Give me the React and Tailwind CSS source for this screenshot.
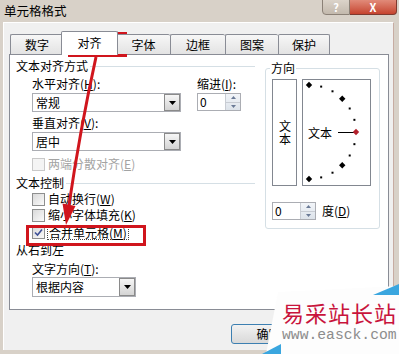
import React from 'react';

const Mn = ({ k }) => (
  <span>
    (<u>{k}</u>)
  </span>
);

function CheckBox({ checked, disabled }) {
  return (
    <span
      className={`w-[13px] h-[13px] shrink-0 border flex items-center justify-center ${
        disabled
          ? 'border-[#c9c9c9] bg-[#f4f4f4]'
          : 'border-[#8e8f8f] bg-gradient-to-br from-[#d9d9d9] to-[#fbfbfb]'
      }`}
    >
      {checked && (
        <svg width="9" height="9" viewBox="0 0 9 9">
          <path d="M1 4.5 L3.5 7 L8 1.5" fill="none" stroke="#3d4f96" strokeWidth="1.6" />
        </svg>
      )}
    </span>
  );
}

function Combo({ value, width, height }) {
  return (
    <div
      className={`flex items-center justify-between border border-[#abadb3] bg-white ${width} ${height}`}
    >
      <span className="pl-[3px]">{value}</span>
      <span className="w-[16px] h-full border border-[#8a8a8a] bg-gradient-to-b from-[#f6f6f6] to-[#d4d4d4] flex items-center justify-center">
        <svg width="7" height="4" viewBox="0 0 7 4">
          <path d="M0 0 H7 L3.5 4 Z" fill="#000" />
        </svg>
      </span>
    </div>
  );
}

function Spinner({ value }) {
  return (
    <div className="flex w-[44px] h-[18px] border border-[#abadb3] bg-white">
      <span className="flex-1 pl-[2px] leading-[16px]">{value}</span>
      <span className="w-[15px] flex flex-col border-l border-[#c8ccd3] bg-gradient-to-b from-[#f2f5f9] to-[#dde3ea]">
        <span className="flex-1 flex items-center justify-center border-b border-[#c8ccd3]">
          <svg width="5" height="3" viewBox="0 0 5 3">
            <path d="M0 3 L2.5 0 L5 3 Z" fill="#6a7a96" />
          </svg>
        </span>
        <span className="flex-1 flex items-center justify-center">
          <svg width="5" height="3" viewBox="0 0 5 3">
            <path d="M0 0 H5 L2.5 3 Z" fill="#6a7a96" />
          </svg>
        </span>
      </span>
    </div>
  );
}

const tabs = [
  { label: '数字', w: 'w-[53px]' },
  { label: '对齐', w: 'w-[57px]', active: true },
  { label: '字体', w: 'w-[54px]' },
  { label: '边框', w: 'w-[55px]' },
  { label: '图案', w: 'w-[53px]' },
  { label: '保护', w: 'w-[52px]' },
];

function Dial() {
  const pts = [];
  for (let a = 90; a >= -90; a -= 15) {
    const r = (a * Math.PI) / 180;
    pts.push({ a, x: 6 + 47 * Math.cos(r), y: 52 - 47 * Math.sin(r) });
  }
  return (
    <svg className="absolute inset-0" width="67" height="105" viewBox="0 0 67 105">
      <line x1="35" y1="52.5" x2="51" y2="52.5" stroke="#000" strokeWidth="1" />
      {pts.map((p) => {
        const big = p.a % 45 === 0;
        if (big) {
          const s = 3.2;
          return (
            <path
              key={p.a}
              d={`M${p.x} ${p.y - s} L${p.x + s} ${p.y} L${p.x} ${p.y + s} L${p.x - s} ${p.y} Z`}
              fill={p.a === 0 ? '#b3202c' : '#000'}
            />
          );
        }
        return <rect key={p.a} x={p.x - 1} y={p.y - 1} width="2" height="2" fill="#000" />;
      })}
    </svg>
  );
}

export default function App() {
  return (
    <div className="relative w-[399px] h-[354px] overflow-hidden bg-[#d8d1c8] text-[12px] leading-[14px] text-black font-['Noto_Sans_CJK_SC',sans-serif]">
      {/* title bar */}
      <div className="h-[22px] flex justify-between">
        <span className="pl-[4px] pt-[4px] text-[12.5px]">单元格格式</span>
        <div className="flex mr-[2px] -mt-[6px] h-[21px]">
          <div className="w-[28px] rounded-bl-[4px] border border-[#8b8177] bg-gradient-to-b from-[#e4ddd4] to-[#c3b9ad] flex items-end justify-center pb-[1px] text-white font-bold text-[11px] leading-[12px]">
            ?
          </div>
          <div className="w-[47px] rounded-br-[4px] border border-l-0 border-[#7e3a30] bg-gradient-to-b from-[#e9a293] to-[#c5432f] flex items-end justify-center pb-[1px] text-white font-bold text-[11px] leading-[12px]">
            X
          </div>
        </div>
      </div>

      {/* client area */}
      <div className="ml-[3px] w-[391px] h-[328px] bg-[#f0f0f0] border-t border-l border-white border-r border-r-[#c7aca2]">
        {/* tabs */}
        <div className="flex items-end ml-[6px] mt-[8px] h-[24px] relative z-10 -mb-[1px]">
          {tabs.map((t) =>
            t.active ? (
              <div
                key={t.label}
                className={`${t.w} -mx-[2px] h-[24px] relative z-10 border border-b-0 border-[#898c95] rounded-t-[2px] bg-white flex justify-center pt-[4px]`}
              >
                {t.label}
              </div>
            ) : (
              <div
                key={t.label}
                className={`${t.w} h-[20px] mb-[1px] border border-b-0 border-r-0 last:border-r border-[#898c95] rounded-t-[2px] bg-gradient-to-b from-[#f7f7f7] to-[#e3e3e3] flex justify-center pt-[3px]`}
              >
                {t.label}
              </div>
            )
          )}
        </div>

        {/* panel */}
        <div className="ml-[5px] w-[380px] h-[256px] border border-[#898c95] bg-white flex">
          <div className="w-[255px] pl-[6px] pr-[10px]">
            <div className="mt-[4px] flex items-center">
              <span>文本对齐方式</span>
              <div className="flex-1 h-px bg-[#d5dfe5] ml-[2px]" />
            </div>
            <div className="ml-[16px]">
              <div className="flex">
                <div className="w-[149px]">
                  <div className="mt-[4px]">
                    水平对齐<Mn k="H" />:
                  </div>
                  <div className="mt-[2px]">
                    <Combo value="常规" width="w-[149px]" height="h-[19px]" />
                  </div>
                </div>
                <div className="ml-[16px]">
                  <div className="mt-[4px]">
                    缩进<Mn k="I" />:
                  </div>
                  <div className="mt-[2px]">
                    <Spinner value="0" />
                  </div>
                </div>
              </div>
              <div className="mt-[4px]">
                垂直对齐<Mn k="V" />:
              </div>
              <div className="mt-[2px]">
                <Combo value="居中" width="w-[149px]" height="h-[19px]" />
              </div>
              <div className="mt-[6px] flex items-center gap-[3px] text-[#a3a3a3]">
                <CheckBox disabled />
                <span>
                  两端分散对齐<Mn k="E" />
                </span>
              </div>
            </div>

            <div className="mt-[5px] flex items-center">
              <span>文本控制</span>
              <div className="flex-1 h-px bg-[#d5dfe5] ml-[2px]" />
            </div>
            <div className="ml-[16px]">
              <div className="mt-[2px] flex items-center gap-[3px]">
                <CheckBox />
                <span>
                  自动换行<Mn k="W" />
                </span>
              </div>
              <div className="mt-[2px] flex items-center gap-[3px]">
                <CheckBox />
                <span>
                  缩小字体填充<Mn k="K" />
                </span>
              </div>
              <div className="mt-[3px] flex items-center gap-[2px]">
                <CheckBox checked />
                <span className="border border-dotted border-[#444] px-[1px] leading-[13px]">
                  合并单元格<Mn k="M" />
                </span>
              </div>
            </div>

            <div className="mt-[3px] flex items-center">
              <span>从右到左</span>
            </div>
            <div className="ml-[16px]">
              <div className="mt-[5px]">
                文字方向<Mn k="T" />:
              </div>
              <div className="mt-[1px]">
                <Combo value="根据内容" width="w-[104px]" height="h-[20px]" />
              </div>
            </div>
          </div>

          {/* orientation group */}
          <div className="relative w-[115px] h-[161px] mt-[13px] border border-[#d5dfe5] rounded-[3px]">
            <span className="absolute left-[4px] -top-[8px] bg-white px-[1px]">方向</span>
            <div className="flex ml-[6px] mt-[10px] gap-[5px]">
              <div className="w-[25px] h-[107px] border border-[#828790] flex items-center justify-center">
                <span className="[writing-mode:vertical-rl] [text-orientation:upright] leading-[14px] tracking-[1px]">
                  文本
                </span>
              </div>
              <div className="relative w-[69px] h-[107px] border border-[#828790] flex items-center pl-[5px]">
                <Dial />
                <span className="relative">文本</span>
              </div>
            </div>
            <div className="flex items-center ml-[6px] mt-[16px]">
              <Spinner value="0" />
              <span className="ml-[6px]">
                度<Mn k="D" />
              </span>
            </div>
          </div>
        </div>

        {/* buttons (second one sits fully under the watermark) */}
        <div className="flex justify-end gap-[6px] pr-[6px] mt-[14px]">
          <div className="w-[75px] h-[20px] rounded-[3px] border border-[#3c7fb1] bg-gradient-to-b from-[#f2f2f2] to-[#d9d9d9] flex items-center justify-center">
            确定
          </div>
          <div className="w-[75px] h-[20px] rounded-[3px] border border-[#707070] bg-gradient-to-b from-[#f2f2f2] to-[#d9d9d9]" />
        </div>
      </div>

      {/* red annotations */}
      <svg className="absolute inset-0 pointer-events-none" width="399" height="354" viewBox="0 0 399 354">
        <rect x="69.5" y="33.5" width="56" height="22" fill="none" stroke="#d0151d" strokeWidth="3" />
        <rect x="27.5" y="226.5" width="117" height="18" fill="none" stroke="#d0151d" strokeWidth="3" />
        <path d="M96 57 Q80 130 69 205" fill="none" stroke="#d0151d" strokeWidth="3" />
        <polygon points="66,225 62.5,203.5 75.5,206" fill="#d0151d" />
      </svg>

      {/* watermark */}
      <svg className="absolute inset-0 pointer-events-none" width="399" height="354" viewBox="0 0 399 354">
        <polygon points="278,292 399,286 399,354 266,354" fill="#fdfdfd" />
        <polygon points="373,295 399,284 399,295" fill="#3aa6df" />
        <polygon points="262,354 281,344 281,354" fill="#3aa6df" />
      </svg>
      <div className="absolute left-[282px] top-[301px] flex flex-col gap-[4px]">
        <span className="text-[22px] leading-[22px] tracking-[1px] text-[#c8143c]">易采站长站</span>
        <span className="text-[14.7px] leading-[16px] text-[#8c8c8c] font-['Liberation_Mono',monospace]">
          www.easck.com
        </span>
      </div>
    </div>
  );
}
